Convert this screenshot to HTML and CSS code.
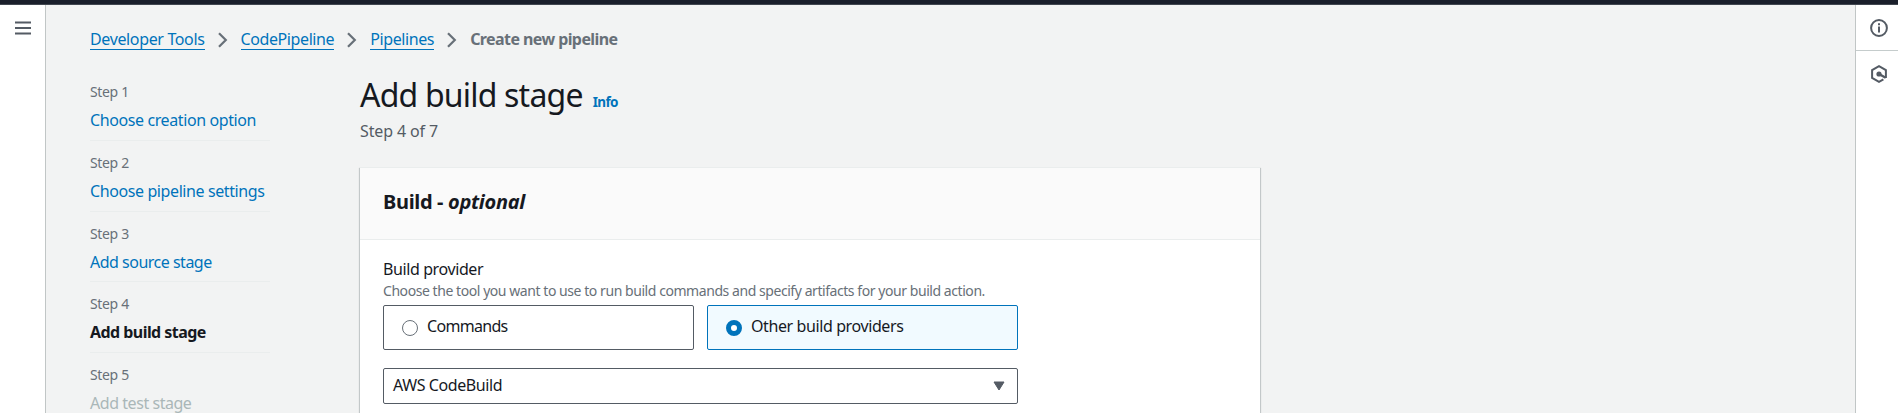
FILE: index.html
```html
<!DOCTYPE html>
<html lang="en">
<head>
<meta charset="utf-8">
<title>Create new pipeline</title>
<link rel="stylesheet" href="styles.css">
</head>
<body>
<div class="topbar"></div>
<div class="shell">
  <nav class="rail rail-left">
    <svg class="menu-icon" width="16" height="14" viewBox="0 0 16 14"><path d="M0 1.5h16M0 7h16M0 12.5h16" stroke="#545b64" stroke-width="2"/></svg>
  </nav>
  <main class="content">
    <nav class="crumbs">
      <a class="crumb crumb-root">Developer Tools</a>
      <svg class="chev" width="10" height="16" viewBox="0 0 10 16"><path d="M1 1.2l6.8 6.8-6.8 6.8" fill="none" stroke="#687078" stroke-width="2.2"/></svg>
      <a class="crumb">CodePipeline</a>
      <svg class="chev" width="10" height="16" viewBox="0 0 10 16"><path d="M1 1.2l6.8 6.8-6.8 6.8" fill="none" stroke="#687078" stroke-width="2.2"/></svg>
      <a class="crumb">Pipelines</a>
      <svg class="chev" width="10" height="16" viewBox="0 0 10 16"><path d="M1 1.2l6.8 6.8-6.8 6.8" fill="none" stroke="#687078" stroke-width="2.2"/></svg>
      <span class="crumb-current">Create new pipeline</span>
    </nav>
    <div class="columns">
      <ol class="steps">
        <li class="step"><span class="step-no">Step 1</span><a class="step-name">Choose creation option</a></li>
        <li class="step"><span class="step-no">Step 2</span><a class="step-name">Choose pipeline settings</a></li>
        <li class="step"><span class="step-no">Step 3</span><a class="step-name tight">Add source stage</a></li>
        <li class="step"><span class="step-no">Step 4</span><span class="step-name active">Add build stage</span></li>
        <li class="step"><span class="step-no">Step 5</span><span class="step-name disabled">Add test stage</span></li>
      </ol>
      <section class="form">
        <header class="heading"><h1 class="title">Add build stage</h1><a class="info">Info</a></header>
        <p class="progress">Step 4 of 7</p>
        <div class="card">
          <h2 class="card-head">Build - <em class="optional">optional</em></h2>
          <div class="card-body">
            <div class="label">Build provider</div>
            <div class="hint">Choose the tool you want to use to run build commands and specify artifacts for your build action.</div>
            <div class="tiles">
              <div class="tile"><span class="radio"></span><span class="tile-text tight">Commands</span></div>
              <div class="tile selected"><span class="radio"></span><span class="tile-text">Other build providers</span></div>
            </div>
            <div class="select"><span class="select-value">AWS CodeBuild</span><svg width="12" height="10" viewBox="0 0 12 10"><path d="M1 1h10L6 9z" fill="#545b64" stroke="#545b64" stroke-linejoin="round"/></svg></div>
          </div>
        </div>
      </section>
    </div>
  </main>
  <aside class="rail rail-right">
    <div class="tool tool-info"><svg width="18" height="18" viewBox="0 0 18 18"><circle cx="9" cy="9" r="7.9" fill="none" stroke="#545b64" stroke-width="2"/><path d="M8 4.2h2v2H8zM8 7.5h2v6H8z" fill="#545b64"/></svg></div>
    <div class="tool"><svg width="18" height="18" viewBox="0 0 18 18"><path d="M15.9 13V5.1L9 1.2 2.1 5.1v7.8L9 16.8l4.4-2.5" fill="none" stroke="#545b64" stroke-width="2"/><path d="M9 9l6.7 3.8" stroke="#545b64" stroke-width="2.4"/><circle cx="9" cy="9" r="2.6" fill="#545b64"/></svg></div>
  </aside>
</div>
</body>
</html>
```
FILE: styles.css
```css
* { box-sizing: border-box; }
body { margin: 0; height: 413px; overflow: hidden; background: #f2f3f3; color: #16191f; font: 16px/20px "Noto Sans", "Open Sans", sans-serif; letter-spacing: -.4px; }
.topbar { height: 5px; background: #1a1f2b; border-bottom: 1px solid #414750; }
.shell { display: flex; height: 408px; }
.rail { background: #fff; flex: none; }
.rail-left { width: 46px; border-right: 1px solid #c1c6c6; padding: 16px 0 0 15px; }
.menu-icon { display: block; }
.rail-right { width: 43px; border-left: 1px solid #c1c6c6; }
.tool { padding: 14px 0 0 14px; height: 46px; }
.tool svg { display: block; }
.tool-info { border-bottom: 1px solid #c5cccc; }
.content { flex: 1; min-width: 0; padding: 24px 0 0 44px; }
.crumbs { display: flex; height: 21px; white-space: nowrap; }
.crumb { color: #0073bb; border-bottom: 1px solid #0073bb; height: 21px; }
.crumb-root { letter-spacing: -.36px; }
.chev { margin: 3px 13px 0 13px; }
.crumb-current { color: #687078; font-weight: 700; letter-spacing: -.58px; }
.columns { display: flex; }
.steps { list-style: none; margin: 20px 0 0; padding: 0; width: 180px; }
.step { display: flex; flex-direction: column; gap: 8px; height: 70.8px; padding-top: 12px; border-bottom: 1px solid #eaeded; white-space: nowrap; }
.step-no { font-size: 14px; letter-spacing: -.35px; color: #687078; }
.step-name { color: #0073bb; }
.step-name.tight { letter-spacing: -.5px; }
.step-name.active { color: #16191f; font-weight: 700; letter-spacing: -.55px; }
.step-name.disabled { color: #aab7b8; letter-spacing: -.45px; }
.form { margin-left: 90px; padding-top: 25px; width: 900px; }
.heading { display: flex; align-items: baseline; gap: 10px; height: 40px; }
.title { margin: 0; font-size: 32px; line-height: 40px; font-weight: 400; letter-spacing: -.8px; white-space: nowrap; }
.info { color: #0073bb; font-size: 13.5px; font-weight: 700; letter-spacing: -.65px; }
.progress { margin: 6px 0 0; color: #545b64; letter-spacing: -.12px; }
.card { margin-top: 26px; height: 260px; background: #fff; border-top: 1px solid #eaeded; box-shadow: 0 1px 1px 0 rgba(0,28,36,.3), 1px 1px 1px 0 rgba(0,28,36,.15), -1px 1px 1px 0 rgba(0,28,36,.15); }
.card-head { margin: 0; height: 72px; padding: 22px 23px 0; line-height: 24px; font-size: 20px; letter-spacing: -.33px; background: #fafafa; border-bottom: 1px solid #eaeded; }
.card-body { padding: 19px 23px 0; }
.hint { margin-top: 2px; font-size: 14px; line-height: 20px; letter-spacing: -.44px; color: #687078; white-space: nowrap; }
.tiles { display: grid; grid-template-columns: 311px 311px; gap: 13px; margin-top: 4px; }
.tile { display: flex; height: 45px; border: 1px solid #545b64; border-radius: 2px; padding: 10px 17px 0 18px; gap: 9px; }
.tile.selected { background: #f1faff; border-color: #0073bb; }
.tile-text.tight { letter-spacing: -.7px; }
.radio { width: 16px; height: 16px; margin-top: 4px; border: 1px solid #687078; border-radius: 50%; background: #fff; }
.selected .radio { border: 5px solid #0073bb; }
.select { display: flex; justify-content: space-between; align-items: center; width: 635px; height: 36px; margin-top: 18px; padding: 0 12px 0 9px; border: 1px solid #545b64; border-radius: 2px; }
.select-value { margin-top: -2px; }
```
